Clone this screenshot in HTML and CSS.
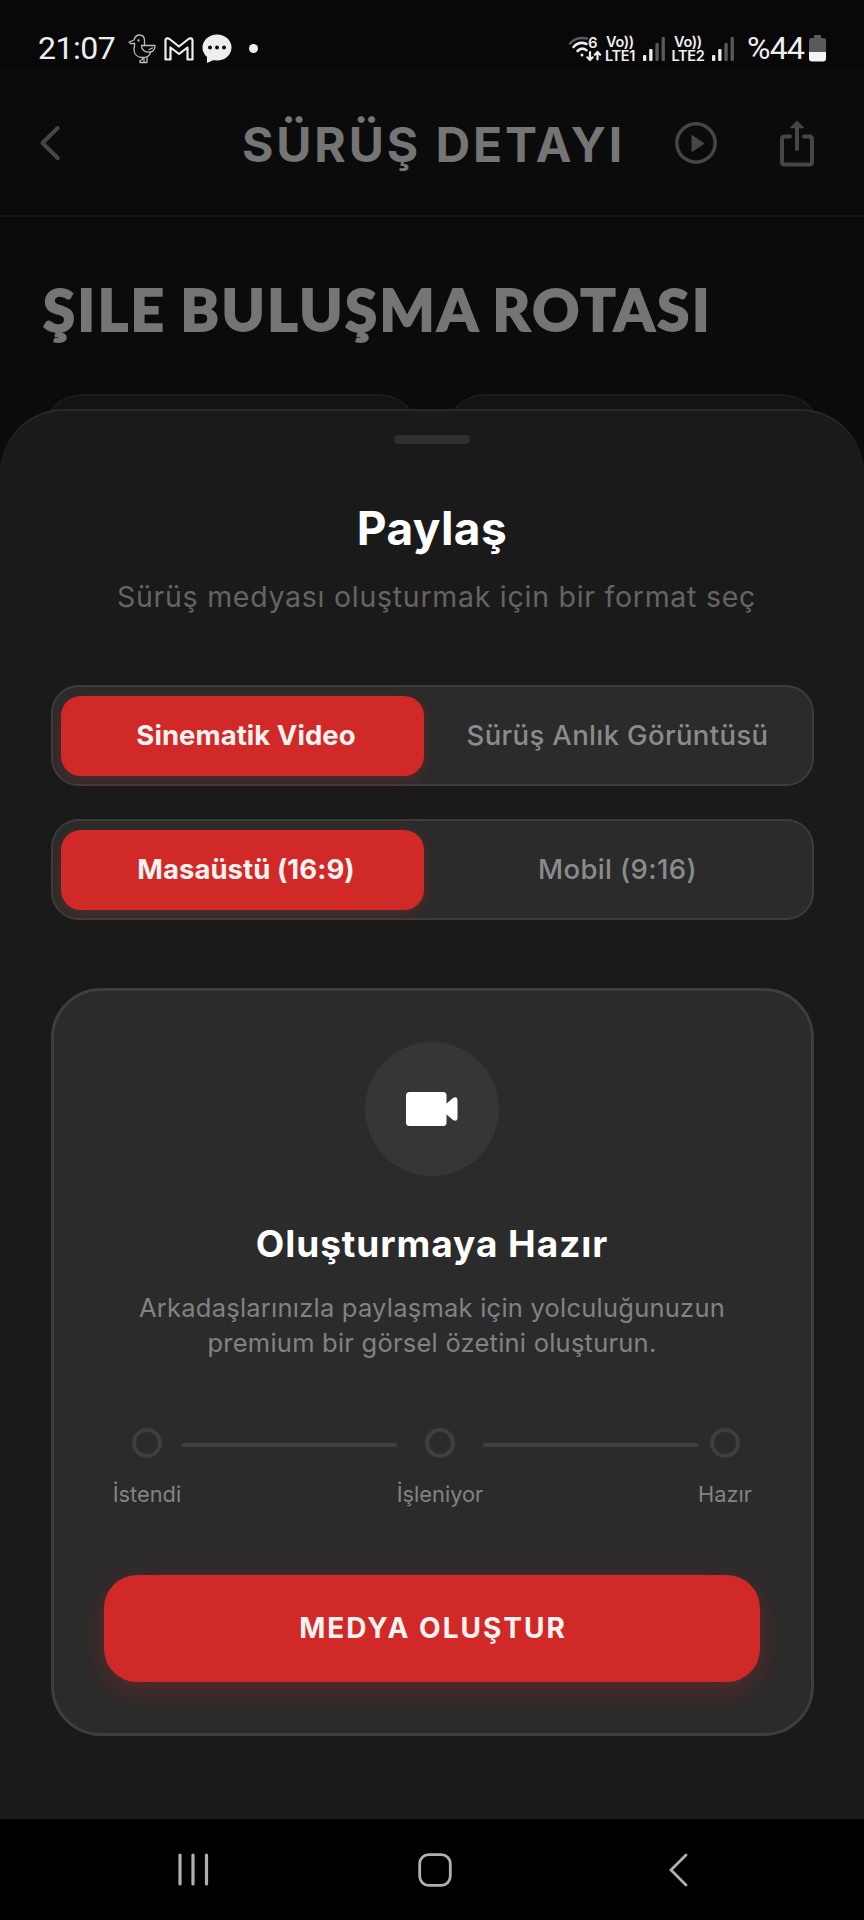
FILE: index.html
```html
<!DOCTYPE html>
<html lang="tr">
<head>
<meta charset="utf-8">
<title>Sürüş Detayı</title>
<link rel="stylesheet" href="styles.css">
</head>
<body>
<div class="phone">
  <div class="status">
    <span class="clock">21:07</span>
    <svg class="duck" width="28" height="30" viewBox="0 0 28 30" fill="none" stroke="#bdbdbd" stroke-width="1.3" stroke-linejoin="round" stroke-linecap="round"><path d="M6.500 9.500H2.500L1 8l5-2C7 2.500 9 1 11.500 1c3.500 0 5 2.500 5 5.500v5"/><path d="M6.500 9.500c.5 2-.5 3-.5 6 0 5 3.500 8 8.500 8 4.500 0 7.500-2 8-5.500"/><path d="M13.500 11.500H27c0 3.500-1.500 6-4.500 6.500-5.500.8-9-2-9-6.500z"/><path d="M21 15.500l3.500-1.500"/><path d="M14.500 24v1.500l-2.500 1V28.500h7V23M16 28.500V24.500"/><circle cx="10.500" cy="6.500" r=".5"/></svg>
    <svg class="gmail" width="30" height="24" viewBox="0 0 30 24" fill="none" stroke="#eee" stroke-width="2.200" stroke-linejoin="round"><path d="M1.500 3.500C1.500 1 4 .8 5.500 2L15 9.500 24.500 2c1.500-1.200 4-1 4 1.500V22.500h-5V10.500L15 17 6.500 10.500v12h-5z"/></svg>
    <svg class="bubble" width="30" height="30" viewBox="0 0 30 30"><ellipse cx="15" cy="13.500" rx="14.500" ry="13" fill="#eee"/><path d="M5 22v7l9-4z" fill="#eee"/><g fill="#090909"><circle cx="8" cy="13.500" r="1.900"/><circle cx="15" cy="13.500" r="1.900"/><circle cx="22" cy="13.500" r="1.900"/></g></svg>
    <span class="dot"></span>
    <span class="spacer"></span>
    <svg class="wifi" width="34" height="34" viewBox="0 -6 34 34" fill="none" stroke="#eee" stroke-width="2.500" stroke-linecap="round"><path d="M2 8.500C6 4 12 2 19 3.500" stroke="#5a5a5a"/><path d="M5.500 12C9 8 14 7 18.500 9"/><path d="M9.500 16c2.500-2.500 6-3 9-.8"/><circle cx="14" cy="20" r="1.500" fill="#eee" stroke="none"/><g stroke-width="2.200"><path d="M22 17v8M19.300 22.300L22 25l2.700-2.700M29.500 24.500v-7M26.800 19.700l2.700-2.700 2.700 2.700"/></g><text x="20" y="13" class="gen">6</text></svg>
    <span class="volte"><span>Vo))</span><span>LTE1</span></span>
    <svg class="bars" width="22" height="24" viewBox="0 0 22 24"><g fill="#eee"><rect x="0" y="18" width="3.300" height="6" rx="1"/><rect x="6.200" y="12" width="3.300" height="12" rx="1"/></g><g fill="#5a5a5a"><rect x="12.400" y="6" width="3.300" height="18" rx="1"/><rect x="18.600" y="0" width="3.300" height="24" rx="1"/></g></svg>
    <span class="volte second"><span>Vo))</span><span>LTE2</span></span>
    <svg class="bars" width="22" height="24" viewBox="0 0 22 24"><g fill="#eee"><rect x="0" y="18" width="3.300" height="6" rx="1"/><rect x="6.200" y="12" width="3.300" height="12" rx="1"/></g><g fill="#5a5a5a"><rect x="12.400" y="6" width="3.300" height="18" rx="1"/><rect x="18.600" y="0" width="3.300" height="24" rx="1"/></g></svg>
    <span class="percent">%44</span>
    <svg class="battery" width="17" height="27" viewBox="0 0 17 27"><path d="M5 0h7v3h2.500Q17 3 17 5.500V17H0V5.500Q0 3 2.500 3H5z" fill="#5a5a5a"/><path d="M0 17h17v6.500q0 3-3 3H3q-3 0-3-3z" fill="#f4f4f4"/></svg>
  </div>

  <header class="appbar">
    <svg class="back" width="22" height="36" viewBox="0 0 22 36" fill="none" stroke="#464646" stroke-width="4" stroke-linecap="round" stroke-linejoin="round"><path d="M18.700 3L3.500 18l15.200 15"/></svg>
    <h1 class="appbar-title">SÜRÜŞ DETAYI</h1>
    <svg class="play" width="42" height="42" viewBox="0 0 42 42"><circle cx="21" cy="21" r="19.200" fill="none" stroke="#464646" stroke-width="3.500"/><path d="M17 13.500v16L29 21.500z" fill="#464646" stroke="#464646" stroke-linejoin="round"/></svg>
    <svg class="share" width="34" height="47" viewBox="0 0 34 47" fill="none" stroke="#464646" stroke-width="4" stroke-linejoin="round" stroke-linecap="round"><path d="M10 16.500H4.500Q2 16.500 2 19v23q0 2.500 2.500 2.500h25Q32 44.500 32 42V19q0-2.500-2.500-2.500H24"/><path d="M17 6v23"/><path d="M11 7.500L17 1.500l6 6z" fill="#464646" stroke-width="1.500"/></svg>
  </header>

  <main class="page">
    <h2 class="route">ŞILE BULUŞMA ROTASI</h2>
    <div class="stats"><div class="stat"></div><div class="stat"></div></div>
  </main>

  <section class="sheet">
    <div class="handle"></div>
    <h2 class="sheet-title">Paylaş</h2>
    <p class="sheet-sub">Sürüş medyası oluşturmak için bir format seç</p>
    <div class="segments">
      <button class="seg active">Sinematik Video</button>
      <button class="seg">Sürüş Anlık Görüntüsü</button>
    </div>
    <div class="segments">
      <button class="seg active">Masaüstü (16:9)</button>
      <button class="seg">Mobil (9:16)</button>
    </div>
    <div class="card">
      <div class="badge"><svg width="52" height="34" viewBox="0 0 52 34" fill="#fff"><rect width="40.500" height="34" rx="3.500"/><path d="M40 12l7-6q4.500-2 4.500 2v18q0 4-4.500 2l-7-6z"/></svg></div>
      <h3 class="card-title">Oluşturmaya Hazır</h3>
      <p class="card-text">Arkadaşlarınızla paylaşmak için yolculuğunuzun<br>premium bir görsel özetini oluşturun.</p>
      <div class="steps">
        <div class="step s1"><i></i><span>İstendi</span></div>
        <div class="line"></div>
        <div class="step s2"><i></i><span>İşleniyor</span></div>
        <div class="line"></div>
        <div class="step s3"><i></i><span>Hazır</span></div>
      </div>
      <button class="cta">MEDYA OLUŞTUR</button>
    </div>
  </section>

  <nav class="navbar">
    <svg width="32" height="33" viewBox="0 0 32 33" stroke="#b0b0b0" stroke-width="3.200" stroke-linecap="round"><path d="M3 2v29M16 2v29M29.500 2v29"/></svg>
    <svg class="home" width="34" height="34" viewBox="0 0 34 34" fill="none" stroke="#b0b0b0" stroke-width="2.800"><rect x="1.700" y="1.700" width="30.600" height="30.600" rx="9"/></svg>
    <svg class="nav-back" width="20" height="34" viewBox="0 0 20 34" fill="none" stroke="#b0b0b0" stroke-width="2.800" stroke-linecap="round"><path d="M18 2L3 17l15 15"/></svg>
  </nav>
</div>
</body>
</html>
```

FILE: styles.css
```css
* { box-sizing: border-box; margin: 0; padding: 0; }
body { background: #0b0b0b; font-family: Inter, "Liberation Sans", sans-serif; }
svg { display: block; flex: none; }
button { border: 0; background: none; font: inherit; color: inherit; }
.phone { position: relative; width: 864px; height: 1920px; overflow: hidden; background: #0b0b0b; }

.status { display: flex; align-items: flex-start; height: 70px; padding: 34px 38px 0 38px; background: #080808; color: #eee; }
.clock, .percent { margin-top: -1px; font: 400 32px/30px Roboto, sans-serif; white-space: nowrap; }
.clock { width: 78px; letter-spacing: -0.5px; }
.duck { margin-left: 12px; }
.gmail { margin: 3px 0 0 8px; }
.bubble { margin-left: 8px; }
.dot { width: 9px; height: 9px; margin: 10px 0 0 17px; border-radius: 50%; background: #eee; }
.spacer { flex: 1; }
.wifi { margin-top: -5px; }
.gen { font: 600 15px Inter, sans-serif; fill: #eee; stroke: none; }
.volte { display: flex; flex-direction: column; align-items: center; width: 32px; margin: 1px 0 0 2px; font: 600 14.5px/14px Inter, sans-serif; letter-spacing: -0.3px; white-space: nowrap; }
.volte.second { width: 34px; margin-left: 6px; }
.bars { margin: 3px 0 0 7px; }
.percent { width: 62px; margin-left: 13px; letter-spacing: -0.7px; }
.battery { margin-top: 1px; }

.appbar { display: flex; height: 147px; padding: 50px 50px 0 39px; border-bottom: 2px solid #141414; align-items: flex-start; }
.back { margin-top: 5px; }
.appbar-title { width: 380px; margin: -5px 0 0 181px; color: #757575; font-size: 48px; font-weight: 700; line-height: 60px; letter-spacing: 2.9px; white-space: nowrap; }
.play { margin: 2px 0 0 53px; }
.share { margin: 0 0 0 63px; }

.page { padding: 0 42px; }
.route { margin-top: 57px; margin-left: 1px; color: #757575; font-family: Lato, sans-serif; font-size: 58px; font-weight: 900; line-height: 70px; letter-spacing: 2.6px; word-spacing: -2.5px; -webkit-text-stroke: 1.8px #757575; white-space: nowrap; }
.stats { display: flex; justify-content: space-between; margin-top: 50px; }
.stat { width: 377px; height: 200px; border: 2px solid #1b1b1b; border-radius: 40px; background: #131313; }

.sheet { position: absolute; top: 409px; left: 0; right: 0; height: 1410px; padding: 24px 50.5px 0; border-top: 2px solid #282828; border-radius: 64px 64px 0 0; background: #1a1a1a; text-align: center; }
.handle { width: 76px; height: 9px; margin: 0 auto; border-radius: 5px; background: #303030; }
.sheet-title { margin-top: 56px; color: #fff; font-size: 46px; font-weight: 700; line-height: 56px; letter-spacing: 0.4px; }
.sheet-sub { margin-top: 23px; padding-left: 9px; color: #646464; font-size: 28.5px; font-weight: 400; line-height: 36px; letter-spacing: 0.73px; white-space: nowrap; }
.segments { display: flex; width: 763px; height: 101px; margin-top: 70px; padding: 9px 8px; border: 2px solid #3c3c3c; border-radius: 28px; background: #2b2b2b; }
.segments + .segments { margin-top: 33px; }
.seg { display: flex; flex: none; align-items: center; justify-content: center; width: 363px; height: 80px; padding: 0 0 3px 8px; border-radius: 20px; color: #8b8b8d; font-size: 27.5px; font-weight: 500; letter-spacing: 0.36px; white-space: nowrap; }
.seg + .seg { width: 380px; }
.seg.active { background: #d12928; color: #fff3f2; font-weight: 700; letter-spacing: 0.05px; box-shadow: 0 4px 16px rgba(209, 41, 40, 0.24); }

.card { display: flex; flex-direction: column; align-items: center; width: 763px; height: 748px; margin-top: 67.5px; padding-top: 50px; border: 3px solid #3e3e3e; border-radius: 50px; background: #2b2b2b; }
.badge { display: flex; flex: none; align-items: center; justify-content: center; width: 134px; height: 134px; margin-top: 1px; border-radius: 50%; background: #363636; }
.card-title { margin-top: 46px; color: #fff; font-size: 37px; font-weight: 700; line-height: 44px; letter-spacing: 0.95px; }
.card-text { margin-top: 24px; color: #828284; font-size: 25.5px; line-height: 35px; letter-spacing: 0.23px; white-space: nowrap; }
.steps { display: flex; width: 640px; margin-top: 68px; }
.step { display: flex; flex: none; flex-direction: column; align-items: center; color: #838385; font-size: 21.8px; line-height: 26px; white-space: nowrap; }
.step i { width: 30px; height: 30px; margin-bottom: 23px; border: 4px solid #3f3f3f; border-radius: 50%; }
.s1 { width: 70px; }
.s2 { width: 86px; }
.s3 { width: 54px; }
.line { flex: 1; height: 4px; margin-top: 15px; border-radius: 2px; background: #404040; }
.cta { flex: none; width: 656px; height: 107px; margin-top: 68px; padding-left: 2px; border-radius: 33px; background: #d12928; color: #fff3f2; font-size: 28px; font-weight: 700; letter-spacing: 2px; box-shadow: 0 8px 28px rgba(209, 41, 40, 0.28); }

.navbar { position: absolute; left: 0; right: 0; bottom: 0; display: flex; align-items: center; height: 101px; padding-left: 177px; background: #000; }
.home { margin-left: 209px; }
.nav-back { margin-left: 216px; }
```
